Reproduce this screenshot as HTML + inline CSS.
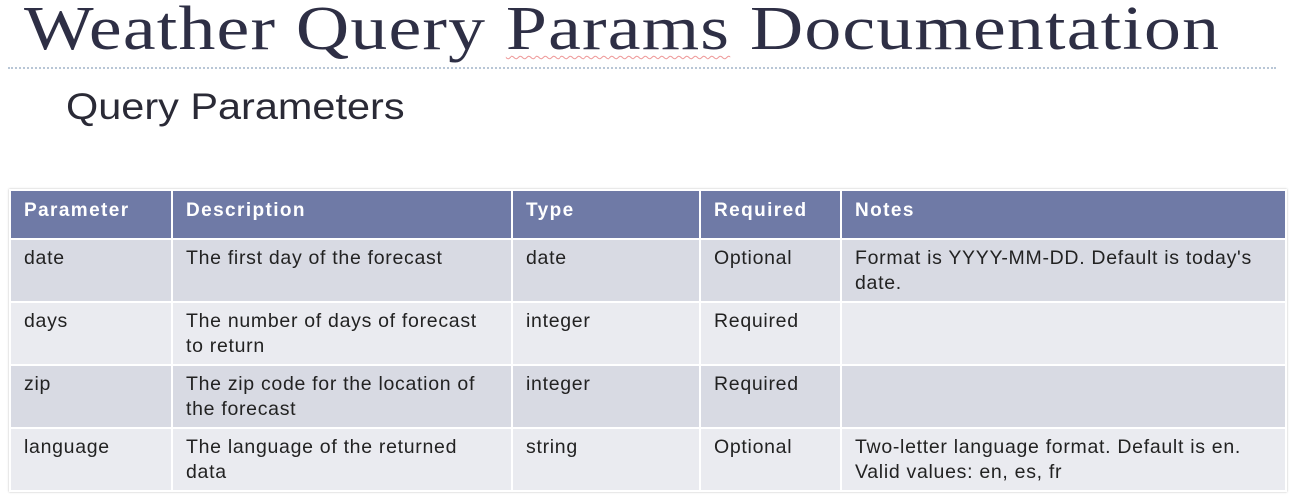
<!DOCTYPE html>
<html><head><meta charset="utf-8"><style>
body{margin:0;width:1296px;height:503px;background:#fff;overflow:hidden;position:relative;font-family:"Liberation Sans",sans-serif;}
.t{position:absolute;left:24px;top:-6px;font-family:"Liberation Serif",serif;font-size:62px;color:#2e2f45;letter-spacing:1px;white-space:nowrap;transform:scaleX(1.19);transform-origin:0 0}
.t u{text-decoration:underline wavy #e99;text-decoration-thickness:1px;text-underline-offset:6px}
.dash{position:absolute;left:8px;right:20px;top:67px;border-top:2px dotted #b8c6d6}
.s{position:absolute;left:66px;top:86px;font-size:37px;color:#2a2a36;white-space:nowrap;transform:scaleX(1.12);transform-origin:0 0}
table{position:absolute;left:9px;top:189px;width:1278px;border-collapse:collapse;box-shadow:0 0 2px #bbb}
td,th{border:2px solid #fff;vertical-align:top;text-align:left;padding:6px 10px 0 13px;font-size:19.5px;letter-spacing:0.7px;color:#222;line-height:25px}
td:nth-child(2){padding-right:30px}
th{background:#6f7aa6;color:#fff;height:40px;padding-top:7px;font-weight:bold;font-size:19px;letter-spacing:1.4px}
tr.a td{background:#d8dae3;height:55px}
tr.b td{background:#eaebf0;height:55px}
</style></head><body>
<div class="t">Weather Query <u>Params</u> Documentation</div>
<div class="dash"></div>
<div class="s">Query Parameters</div>
<table>
<tr><th style="width:137px">Parameter</th><th style="width:315px">Description</th><th style="width:163px">Type</th><th style="width:116px">Required</th><th>Notes</th></tr>
<tr class="a"><td>date</td><td>The first day of the forecast</td><td>date</td><td>Optional</td><td>Format is YYYY-MM-DD. Default is today's date.</td></tr>
<tr class="b"><td>days</td><td>The number of days of forecast to return</td><td>integer</td><td>Required</td><td></td></tr>
<tr class="a"><td>zip</td><td>The zip code for the location of the forecast</td><td>integer</td><td>Required</td><td></td></tr>
<tr class="b"><td>language</td><td>The language of the returned data</td><td>string</td><td>Optional</td><td>Two-letter language format. Default is en. Valid values: en, es, fr</td></tr>
</table>
</body></html>
